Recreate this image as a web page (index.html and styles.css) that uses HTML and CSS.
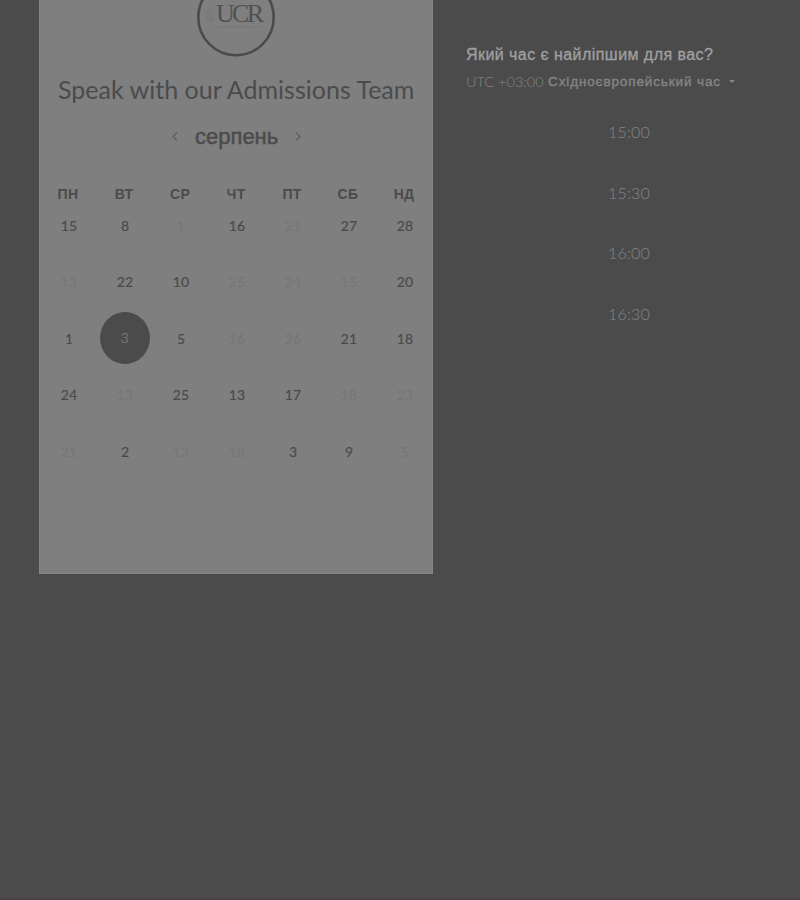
FILE: index.html
```html
<!DOCTYPE html>
<html lang="uk">
<head>
<meta charset="utf-8">
<title>Speak with our Admissions Team</title>
<link rel="stylesheet" href="styles.css">
</head>
<body>
<main class="page">
  <section class="calendar">
    <svg class="logo" width="80" height="58" viewBox="0 0 80 58">
      <circle cx="40" cy="17.500" r="37.700" fill="none" stroke="#4b4b4b" stroke-width="2.600"/>
      <path d="M11 10v10M13.500 7v13M16 11v9M10 20h8" stroke="#767676" fill="none"/>
      <text class="logo-name" x="20" y="22" textLength="48">UCR</text>
      <text class="logo-sub" x="15" y="28" textLength="50">University College Roosevelt</text>
    </svg>
    <h1 class="title">Speak with our Admissions Team</h1>
    <div class="month">
      <svg width="8" height="12" viewBox="0 0 8 12"><path d="M6 1.500L2 5.500L6 9.500"/></svg>
      <h2 class="month-name">серпень</h2>
      <svg width="8" height="12" viewBox="0 0 8 12"><path d="M2 1.500L6 5.500L2 9.500"/></svg>
    </div>
    <div class="weekdays"><span>ПН</span><span>ВТ</span><span>СР</span><span>ЧТ</span><span>ПТ</span><span>СБ</span><span>НД</span></div>
    <div class="days">
      <span>15</span><span>8</span><span class="off">1</span><span>16</span><span class="off">21</span><span>27</span><span>28</span>
      <span class="off">13</span><span>22</span><span>10</span><span class="off">25</span><span class="off">24</span><span class="off">15</span><span>20</span>
      <span>1</span><span class="selected"><b>3</b></span><span>5</span><span class="off">16</span><span class="off">26</span><span>21</span><span>18</span>
      <span>24</span><span class="off">13</span><span>25</span><span>13</span><span>17</span><span class="off">18</span><span class="off">23</span>
      <span class="off">21</span><span>2</span><span class="off">13</span><span class="off">18</span><span>3</span><span>9</span><span class="off">5</span>
    </div>
  </section>
  <section class="times">
    <h3 class="question">Який час є найліпшим для вас?</h3>
    <div class="zone"><span class="utc">UTC +03:00</span><span class="zone-name">Східноєвропейський час</span><i class="caret"></i></div>
    <div class="slots"><span>15:00</span><span>15:30</span><span>16:00</span><span>16:30</span></div>
  </section>
</main>
</body>
</html>
```
FILE: styles.css
```css
* { box-sizing: border-box; }
body { margin: 0; background: #4b4b4b; }
h1, h2, h3 { margin: 0; font-weight: 400; }
.page {
  display: flex;
  align-items: flex-start;
  height: 900px;
  padding-left: 39px;
  overflow: hidden;
  border-bottom: 2px solid #4b4146;
  font-family: Lato, "Liberation Sans", sans-serif;
  color: #4b4b4b;
}
.calendar {
  display: flex;
  flex-direction: column;
  width: 394px;
  height: 574px;
  background: #7f7f7f;
  border: solid #858585;
  border-width: 0 1px 1px;
  flex: none;
}
.logo { display: block; margin-left: 156px; flex: none; }
.logo-name { font: 26px "Liberation Serif", serif; fill: #505050; }
.logo-sub { font: 4px "Liberation Serif", serif; fill: #747474; }
.title {
  height: 62px;
  line-height: 62px;
  padding-left: 18px;
  font-size: 25px;
  letter-spacing: .01px;
  white-space: nowrap;
}
.month {
  display: flex;
  align-items: center;
  height: 34px;
  padding-left: 131px;
  gap: 16px;
}
.month svg { fill: none; stroke: #606060; stroke-width: 1.4; }
.month-name {
  width: 83px;
  font: 22px/36px "Liberation Sans", sans-serif;
  -webkit-text-stroke: .5px #4b4b4b;
  white-space: nowrap;
}
.weekdays, .days {
  display: grid;
  grid-template-columns: repeat(7, 56px);
  text-align: center;
}
.weekdays {
  height: 44px;
  padding-top: 25px;
  font: bold 14px/30px "Liberation Sans", sans-serif;
  letter-spacing: .3px;
}
.days {
  grid-auto-rows: 56.4px;
  line-height: 56px;
  font-size: 14px;
  letter-spacing: .1px;
  -webkit-text-stroke: .2px;
  padding-left: 1px;
}
.off { color: #777777; }
.selected { display: flex; align-items: center; justify-content: center; }
.selected b {
  width: 50px;
  height: 52px;
  margin: -2px 1px 0 0;
  border-radius: 50%;
  background: #4b4b4b;
  color: #808080;
  font-weight: 300;
  line-height: 51px;
  flex: none;
}
.times { width: 367px; padding: 43px 0 0 33px; color: #a0a0a0; }
.question {
  font: 16px/24px "Liberation Sans", sans-serif;
  letter-spacing: .44px;
  -webkit-text-stroke: .3px;
  white-space: nowrap;
}
.zone { display: flex; align-items: center; height: 29px; color: #858585; white-space: nowrap; }
.utc { width: 82px; font-size: 14.5px; font-weight: 300; }
.zone-name {
  width: 174px;
  font: 13.5px "Liberation Sans", sans-serif;
  letter-spacing: .88px;
  -webkit-text-stroke: .4px;
}
.caret { margin-left: 7px; border: 3px solid transparent; border-top-color: #858585; border-bottom: 0; }
.slots {
  display: grid;
  grid-auto-rows: 60.7px;
  width: 326px;
  margin-top: 6px;
  line-height: 60px;
  text-align: center;
  font-size: 16px;
  font-weight: 300;
  letter-spacing: .2px;
  color: #858585;
}
```
